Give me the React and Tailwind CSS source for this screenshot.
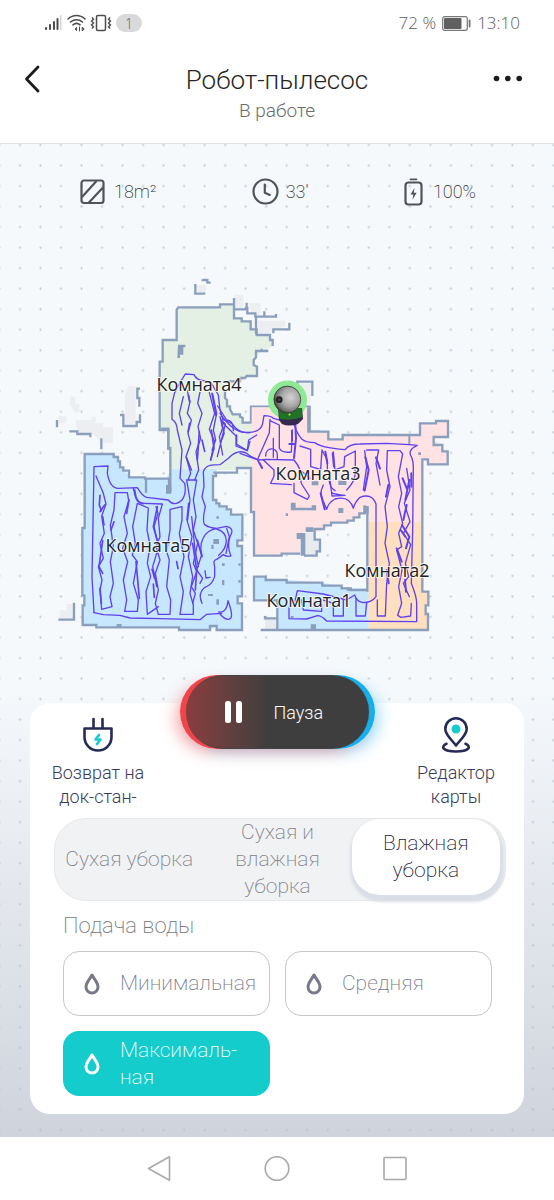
import React, { useState } from "react";

const wall = "#8b9fbd";

function StatusBar() {
  return (
    <div className="flex h-[46px] items-center justify-between pr-[34px] pl-11 font-['Open_Sans',sans-serif] text-[17px] font-light text-[#5c5c5c]">
      <div className="flex items-center gap-1">
        <svg className="h-[18px] w-[19px]" viewBox="0 0 19 18" fill="#4d4d4d">
          <rect x="1" y="13" width="2" height="3" rx="1" />
          <rect x="5" y="10" width="2" height="6" rx="1" />
          <rect x="9" y="7" width="2" height="9" rx="1" />
          <rect x="12.500" y="4" width="2" height="12" rx="1" />
          <rect x="16" y="1" width="1.500" height="15" rx=".7" fill="#d5d5d5" />
        </svg>
        <svg className="h-[18px] w-[19px]" viewBox="0 0 19 18" fill="none" stroke="#4d4d4d" strokeWidth="1.600" strokeLinecap="round">
          <path d="M1 5C6 .3 13 .3 18 5M3.500 8c3.500-3 8.500-3 12 0M6 10.800c2-1.700 5-1.700 7 0" />
          <path d="M9.300 13.700L8 15l1.300 1.300zM12.500 13v4M15.500 13.300l1.700 1.700-1.700 1.700z" strokeWidth="1" fill="#4d4d4d" />
        </svg>
        <svg className="h-[18px] w-[22px]" viewBox="0 0 22 18" fill="none" stroke="#4d4d4d" strokeWidth="1.500">
          <rect x="6.500" y="1.500" width="9" height="15" rx="1.500" />
          <path d="M2 3.500l1.500 1.800L1.500 7l2 2-2 2 2 1.800L2 14.500M20 3.500l-1.500 1.800L20.500 7l-2 2 2 2-2 1.800 1.500 1.700" strokeWidth="1.400" />
        </svg>
        <span className="flex h-[18px] w-[26px] items-center justify-center rounded-full bg-[#d9d9d9] text-[14px]">1</span>
      </div>
      <div className="flex items-center gap-[6px]">
        <span>72 %</span>
        <svg className="h-[15px] w-[29px]" viewBox="0 0 29 15">
          <rect x=".7" y=".7" width="24.600" height="13.600" rx="2" fill="none" stroke="#777" strokeWidth="1.200" />
          <rect x="2" y="2" width="17.500" height="11" rx="1" fill="#606060" />
          <rect x="26.700" y="3.500" width="1.800" height="8" rx=".8" fill="#777" />
        </svg>
        <span>13:10</span>
      </div>
    </div>
  );
}

function Header() {
  return (
    <header className="flex h-[98px] items-start justify-between border-b border-[#dedfe1] px-[22px] pt-[18px]">
      <button aria-label="Назад" className="flex h-[30px] w-9 items-center">
        <svg className="h-[30px] w-5" viewBox="0 0 20 30" fill="none" stroke="#1c1c1c" strokeWidth="2.800" strokeLinecap="round" strokeLinejoin="round">
          <path d="M16 3L4.500 15 16 27" />
        </svg>
      </button>
      <div className="text-center font-light">
        <h1 className="text-[26px] leading-8 text-[#262626]">Робот-пылесос</h1>
        <p className="text-[19px] leading-[30px] text-[#6b6b6b]">В работе</p>
      </div>
      <button aria-label="Меню" className="-ml-1 flex h-[30px] w-10 items-center">
        <svg className="h-[30px] w-8" viewBox="0 0 32 30" fill="#1c1c1c">
          <circle cx="4.500" cy="14.500" r="2.800" />
          <circle cx="15.800" cy="14.500" r="2.800" />
          <circle cx="27.200" cy="14.500" r="2.800" />
        </svg>
      </button>
    </header>
  );
}

function Stats() {
  return (
    <div className="flex h-[95px] items-center justify-between px-[78px] pl-20 text-[18px] font-extralight text-[#303336]">
      <div className="flex items-center gap-[9px]">
        <svg className="h-[26px] w-[25px]" viewBox="0 0 25 26" fill="none" stroke="#505458" strokeWidth="2.200">
          <rect x="1.500" y="1.500" width="22" height="22.500" rx="2.500" />
          <path d="M2 18L16.500 2M8.500 24L23 8.500" />
        </svg>
        <span>18m²</span>
      </div>
      <div className="flex items-center gap-[7px]">
        <svg className="h-[27px] w-[27px]" viewBox="0 0 27 27" fill="none" stroke="#505458" strokeWidth="2.200" strokeLinecap="round" strokeLinejoin="round">
          <circle cx="13.500" cy="13.500" r="12" />
          <path d="M12.800 6.500v8.200l5 2.200" />
        </svg>
        <span>33'</span>
      </div>
      <div className="flex items-center gap-[10px]">
        <svg className="h-[28px] w-[19px]" viewBox="0 0 19 28" fill="none" stroke="#505458" strokeWidth="2.200">
          <path d="M6.500 1.300h6" strokeLinecap="round" strokeWidth="1.800" />
          <rect x="1.500" y="4.500" width="16" height="22" rx="3" />
          <path d="M10.500 10L6.500 16.500h2.800L8.500 21.500l4.200-6.800H9.800z" fill="#505458" stroke="none" />
        </svg>
        <span>100%</span>
      </div>
    </div>
  );
}

// The three groups below share a scale of three drawing units to one map pixel.
function FloorMap() {
  return (
    <svg className="w-full" viewBox="0 239 554 436" role="img" aria-label="Карта уборки">
      <defs>
        <radialGradient id="dome" cx=".62" cy=".42" r=".62">
          <stop offset="0" stopColor="#d2d2d2" />
          <stop offset=".55" stopColor="#a6a6a6" />
          <stop offset=".85" stopColor="#747474" />
          <stop offset="1" stopColor="#444" />
        </radialGradient>
      </defs>
      <g transform="translate(150 270) scale(.33333)">
        <path fill="#eceef0" d="M254 74h26v42h-26zM295 100h36v38l-26-8zM325 152h80v16l-50 22h-30zM140 45h26v22h-26zM448 340h34v60h-34z" />
        <path fill="#e3f0e3" d="M80 115L210 112 212 103 252 103V145L275 148 302 155 305 178 320 182 322 195 360 197 368 210V228L335 243 318 262 310 275 322 290V318L290 322 270 335 225 350 230 405 240 415 250 433 270 440 280 458 305 462V590H260V600H60L55 535V480L28 475V275L38 270V210L78 208z" />
        <g fill="none" stroke={wall} strokeWidth="7">
          <path d="M55 540V480H29V275H38V210H80V119L85 112H210V103H252M252 84V145H275V154H302V178H320V195H360V210H368V228M355 243H335V236M335 243H318V262L311 270V285L321 290V318H290L285 324H270V334H235M225 360V384L231 390V409H240V418L248 433H270V440L278 444V458H303V410H479V486H510M442 372V335H487V378" />
          <path d="M252 118H285L290 110V98M292 110V130H316V140H378V132M343 124V140M318 140V192M418 158V178H370V190M158 28V30H172V38H182M136 42V71H166" />
        </g>
        <path fill={wall} d="M84 224h22v8h-6v22h-10v10h-8z" />
      </g>
      <g transform="translate(50 370) scale(.33333)">
        <path fill="#eceef1" d="M60 80h16v22h12v25h-14l-14-24zM25 138h24v22H25zM75 150h50v-10h12v20h22v12h30v48h-28l-38-32H85zM225 70l10-22h22v115h-32zM30 738v-18h20v-18h22v44H30z" />
        <path fill="#c6e7fd" d="M105 250H185L205 262 210 290 240 320 285 325H350L362 298H500V308H490V390L510 400 545 432 575 440 578 510 560 515 562 528 578 530V675L565 680 568 700 578 705 575 780H510L495 768 480 780H390L385 770H140L135 765H98V705L105 675 98 670V475L105 470z" />
        <g fill="none" stroke={wall} strokeWidth="7">
          <path d="M333 176H355V234H361V366M490 308H561V294H600M498 308V318H489V390H499V400H508V409H530V418H543V434H577V511H562V528H576V679H563V700H576V780H512V780H500V768H480V780H387V772H139V765H98V706H103V676H97V474H104V252H191V261H204V274H210V292H220V302H237V322H285V326H357V366M288 326V368" />
          <path d="M21 150V172M58 184H82V192H121V202M154 205V238M210 135H220V168H260V156H270V133M270 56H262V84H268V110M72 698V749H25" />
        </g>
        <path fill={wall} d="M348 345h16v26h-16zM490 507h17v15h-17zM484 524h7v13h-7zM499 439h8v7h-8zM516 580h8v8h-8zM565 580h7v7h-7zM516 630h7v16h-7zM565 630h7v8h-7zM474 672h15v6h-15zM499 688h8v16h-8zM200 762h15v10h-15z" />
      </g>
      <g transform="translate(220 370) scale(.33333)">
        <path fill="#e7eaee" d="M252 488h36v22h12v35l-16 12h-32zM135 742h36v38h-36zM640 210l20 10-14 20zM145 755h20v20h-20z" />
        <path fill="#fee2e4" d="M95 112H265V185H325L330 208H368L370 195H600V160H648V155H684V200H640L642 225 668 235 684 250V283H630L607 268 603 455H445V408H430L420 440 395 455 340 462 300 485H260L240 490V548H185L184 557H103V425H93z" />
        <path fill="#fedfbf" d="M445 455H603L607 665H622V705H615V730H622V778H445z" />
        <path fill="#c6e7fd" d="M103 618L135 625 200 630 310 638 390 655H445V778H175V692H103z" />
        <g fill="none" stroke={wall} strokeWidth="7">
          <path d="M265 112V185H325V208H368V195H600V160H648V153H684V201H641V225H667V244H683V283H624V268H607V665H625V706H617V732H624V780H133L122 780M172 780V745H135V738M93 290V426H102V557H185V551H241M442 408V665M442 660H390L385 655H365V647H307V638H200V630H137V620H102V691H172V780" />
          <path d="M434 406V430H418V442H401V452H382V458H333V466H312V477H284V490M284 484V509H300V544H290V557H252M216 400V417H285V408" />
          <path d="M568 198V222" strokeWidth="6" />
        </g>
        <path fill={wall} d="M230 489h26v68h-14v-50h-12zM257 472h23v14h-23zM213 398h14v20h-14zM275 406h13v15h-13zM355 414h15v15h-15zM355 332h24v13h-24zM275 334h20v12h-20zM272 763h16v16h-16zM212 738h9v6h-9zM197 430h7v8h-7zM595 247h8v8h-8zM430 408h16v22h-16zM380 652h16v10h-16z" />
      </g>

      <g fill="none" stroke="#5f42ee" strokeLinejoin="round" strokeLinecap="round">
        <g transform="translate(50 370) scale(.33333)" strokeWidth="4">
          <path d="M132 728L126 620 132 290 174 288 172 310Q180 355 205 355L262 353Q278 380 290 382L355 390Q372 412 396 390 410 372 404 340L390 325 396 240 382 180Q380 155 366 148V100L374 68 392 34 406 12 432 14Q440 30 455 31L482 36 505 75 510 120 518 148 545 160 557 174Q575 190 600 188" />
          <path d="M132 728L160 734 210 736 240 744 330 746 450 749 470 733 515 730M138 318L160 370 168 402 155 438 163 490 150 520 160 565 145 590 156 630 150 660 155 718 186 710 180 680 190 640 181 575 190 530 181 465 192 420 195 368H232L236 392 222 440 232 490 218 535 233 575 220 630 230 690 224 724H262L265 690 250 640 262 575 247 555 256 520 248 470 262 400 295 414 291 480 300 525 292 580 302 620 288 665 292 733 325 710M325 733H360L362 690 350 650 358 570 350 545 360 480V418L396 410V450L388 490 402 560 390 620 400 665 390 733H430V705L420 670 428 620 415 560 426 500 412 455 420 390 410 330H438" />
          <path d="M250 355L256 380Q262 400 280 400L337 402 325 445 330 500 318 530 330 570 316 610 325 660 316 700 325 733M318 410L324 430 312 470 326 530 308 590 320 650M440 330L430 390 438 440 430 480 443 520 430 580 440 605 424 650 436 670 428 700M400 80L388 130 396 165M412 62L420 95 412 130 424 150 414 190 422 220 408 260 422 310 415 328M450 66L443 100 456 130 444 170 452 205 438 245 446 300 434 330M478 68L494 130 478 178 494 215 482 270M488 72L500 130 490 180 497 210 486 240M510 140L518 175 508 200 518 255M512 148L526 162 512 220 502 260M503 108L530 150Q550 150 550 182M515 155L558 198V228L592 242 600 214" />
          <path d="M600 258Q570 230 536 264L510 284Q490 284 480 286 465 290 460 305L462 350 456 380 466 410Q456 455 464 464 480 475 500 475L530 469Q555 475 540 500 530 530 543 558Q532 562 520 554L500 568Q488 570 494 590V620Q486 645 465 652 442 670 456 700M500 476C462 480 445 520 456 556M506 556C535 530 540 490 500 477M530 475L538 500 528 550M465 602L468 624 480 622M510 732Q530 755 542 745 550 735 534 692 530 730 506 726M455 555L440 600 458 625 450 640M425 440L435 540 445 590" />
          <path strokeWidth="5" d="M150 376L148 405 154 422M164 405L150 425M158 512L147 590 158 610M150 655L154 700M158 440L162 465M192 455L183 480M237 390L230 430M258 575L268 685M415 75L419 96M419 160L414 185M409 262L424 300M448 185L442 270M456 210L464 244M486 70L498 136M484 180L492 235 482 270M516 160L522 190 512 216M306 598L314 625M322 410L310 470 330 540M380 575L384 596M416 400L411 450M428 520L440 600 436 660M442 510L456 560M254 360L258 382Q265 400 280 401M310 642L313 682" />
        </g>
        <g transform="translate(220 370) scale(.33333)" strokeWidth="4">
          <path d="M0 130Q40 188 75 187 122 190 128 160L132 137Q155 138 160 145L185 152 220 152Q226 185 245 207 258 218 285 218 300 232 375 239 388 222 420 222L500 220 568 224 592 226Q560 240 575 262 580 275 580 290L578 480 574 640Q590 680 590 700V755L320 753Q305 737 292 737L260 747 207 746V712" />
          <path d="M90 258L116 270 140 268 222 270Q235 285 240 300L270 325M114 270L60 250M310 345Q298 370 306 385L320 418Q325 398 345 387 388 375 400 415 404 398 420 382 455 368 468 402V680Q455 698 430 698 410 695 404 675L380 690 310 672 232 662 225 694M50 195V223L82 242 86 210 110 195M150 148L148 188 112 270 126 292M150 152L178 165V235Q185 250 214 246L217 180M160 205V262M137 258C137 230 172 230 172 255V266M240 228L272 238V290L302 298 306 240 322 270V300M340 246L345 300 372 290 374 260 406 243V294M130 270L162 300V318L152 340 214 344M222 340V368L262 388 268 378 245 342 240 325M330 330L336 378 375 376Q345 374 335 368" />
          <path d="M328 320Q325 350 345 362M380 360Q410 330 405 300M434 242L440 290 430 360M440 240H476L468 280 480 345M502 244L500 300 510 350 495 410 502 470 495 520 508 580 500 640 496 738H472V690M502 242H540L548 252 535 320 545 370 536 410 548 460 536 490 545 530 530 540 546 600 536 650 545 700 533 736 543 742 572 738 574 700M560 295L570 360 553 400 570 455 550 490 572 524 556 580 566 620 550 640 568 680M408 685V738H436L440 698M370 680V738H340V700L310 690M245 690L250 720 305 724V705" />
          <path strokeWidth="6" d="M226 162L228 205 222 264M216 182V212M208 222H224M436 262L446 300 434 362M548 325L562 360M568 330L556 390M560 405L550 450M546 465L568 500 558 535M542 480L556 500M530 535L545 575M555 630L558 665M118 278L126 294M316 245L322 280M338 250L342 290M505 345L498 380M468 262L480 296M302 370L314 418M500 600L506 640M574 310V350" />
        </g>
      </g>

      <circle cx="287.500" cy="400" r="19.500" fill="#8ee894" />
      <path d="M278 408h24l1 11-5 5q-9 3-16 0l-3-4z" fill="#36274f" />
      <path d="M278.500 408h23l1 9q-10 4-23 2z" fill="#217126" />
      <circle cx="289.500" cy="414.500" r="1" fill="#d9ec29" />
      <circle cx="287.300" cy="399.500" r="13.400" fill="url(#dome)" stroke="#333" strokeWidth=".8" />
      <circle cx="279.200" cy="399.700" r="3.400" fill="#222" />
      <circle cx="279.200" cy="399.700" r="1.300" fill="#444" />

      <g className="font-['Open_Sans',sans-serif] text-[18px]" fill="#202225" stroke="#fff" strokeWidth="2" strokeOpacity=".8" strokeLinejoin="round" paintOrder="stroke" textAnchor="middle">
        <text x="199" y="391">Комната4</text>
        <text x="318" y="480">Комната3</text>
        <text x="387" y="577">Комната2</text>
        <text x="309" y="607">Комната1</text>
        <text x="148" y="552">Комната5</text>
      </g>
    </svg>
  );
}

function PauseButton() {
  return (
    <button className="relative z-10 -mb-[46px] self-center rounded-full bg-linear-to-r from-[#f04448] from-50% to-[#16aeeb] to-50% px-[6px] text-white shadow-[-8px_6px_16px_-4px_rgba(240,68,72,0.45),8px_6px_16px_-4px_rgba(22,174,235,0.4)]">
      <span className="flex h-[74px] w-[183px] items-center gap-8 rounded-full border-y border-[#454545] bg-linear-to-r from-[#8a3c3e] via-[#3e3e3e] via-45% to-[#3e3e3e] pl-[39px] text-[18px] font-light">
        <svg className="h-[22px] w-[17px]" viewBox="0 0 17 22" fill="#fff">
          <rect width="6" height="22" rx="2.500" />
          <rect x="11" width="6" height="22" rx="2.500" />
        </svg>
        Пауза
      </span>
    </button>
  );
}

function Actions() {
  return (
    <div className="flex justify-between px-5 text-center text-[18px] leading-6 font-light text-[#393c5c]">
      <button className="flex w-24 flex-col items-center gap-2">
        <svg className="h-9 w-8" viewBox="0 0 32 36" fill="none" stroke="#252a57" strokeWidth="2.600" strokeLinecap="round" strokeLinejoin="round">
          <path d="M11.500 2v9M20.500 2v9M2.500 11.500h27V20a13.500 13.500 0 0 1-27 0z" />
          <path d="M17 18l-3.500 4.500h5L15 27" stroke="#16cccc" strokeWidth="2.600" />
        </svg>
        <span>Возврат на док-стан-</span>
      </button>
      <button className="flex w-24 flex-col items-center gap-2">
        <svg className="h-9 w-8" viewBox="0 0 32 36" fill="none" stroke="#252a57" strokeWidth="2.600" strokeLinecap="round" strokeLinejoin="round">
          <path d="M16 28.500C12 23 5.300 18 5.300 12a10.700 10.700 0 0 1 21.400 0c0 6-6.700 11-10.700 16.500z" />
          <path d="M6.500 26.800c-6 2.600-4.200 7.700 9.500 7.700s15.500-5.100 9.500-7.700" />
          <circle cx="16" cy="12" r="4.500" fill="#16cccc" stroke="none" />
        </svg>
        <span>Редактор карты</span>
      </button>
    </div>
  );
}

function Modes() {
  const modes = ["Сухая уборка", "Сухая и влажная уборка", "Влажная уборка"];
  const [mode, setMode] = useState(2);
  return (
    <div className="mt-[9px] mr-[18px] ml-6 grid grid-cols-3 rounded-[32px] border border-[#e6e8ea] bg-[#f1f2f4] pr-[5px] text-[21px] leading-[27px] font-extralight">
      {modes.map((name, i) => (
        <button
          key={name}
          onClick={() => setMode(i)}
          aria-pressed={mode === i}
          className={
            mode === i
              ? "mb-[5px] rounded-[28px] bg-white px-7 text-[#16183c] shadow-[1px_4px_3px_3px_#dadee6]"
              : i === 1
                ? "px-6 text-[#7d8088]"
                : "text-[#7d8088]"
          }
        >
          {name}
        </button>
      ))}
    </div>
  );
}

function Drop() {
  return (
    <svg className="h-[22px] w-4 shrink-0" viewBox="0 0 16 22" fill="none" stroke="currentColor" strokeWidth="3" strokeLinejoin="round">
      <path d="M8 2C6 6 2 9.500 2 14a6 6 0 0 0 12 0C14 9.500 10 6 8 2z" />
    </svg>
  );
}

function WaterSupply() {
  const levels = ["Минимальная", "Средняя", "Максималь-ная"];
  const [level, setLevel] = useState(2);
  return (
    <section className="mt-[9px] pr-8 pl-[33px] font-extralight">
      <h2 className="text-[22px] leading-8 text-[#767980]">Подача воды</h2>
      <div className="mt-[9px] grid grid-cols-2 gap-[15px]">
        {levels.map((name, i) => (
          <button
            key={name}
            onClick={() => setLevel(i)}
            aria-pressed={level === i}
            className={
              level === i
                ? "flex h-[65px] items-center gap-5 rounded-2xl bg-[#14cccb] pl-[21px] text-left text-[21px] leading-[27px] text-white"
                : "flex h-[65px] items-center gap-5 rounded-2xl border border-[#c7c7ca] pl-5 text-left text-[21px] leading-[27px] text-[#77798b]"
            }
          >
            <Drop />
            <span className="w-32">{name}</span>
          </button>
        ))}
      </div>
    </section>
  );
}

function NavBar() {
  return (
    <nav className="flex h-[63px] items-center justify-center gap-[92px] bg-white">
      <button aria-label="Назад">
        <svg className="h-[27px] w-[26px]" viewBox="0 0 26 27" fill="none" stroke="#a9a9a9" strokeWidth="1.600" strokeLinejoin="round">
          <path d="M23.500 1.800v23.400L2.500 13.500z" />
        </svg>
      </button>
      <button aria-label="Домой">
        <svg className="h-[27px] w-[26px]" viewBox="0 0 26 27" fill="none" stroke="#a9a9a9" strokeWidth="1.600">
          <circle cx="13" cy="13.500" r="11.800" />
        </svg>
      </button>
      <button aria-label="Недавние">
        <svg className="h-[27px] w-[26px]" viewBox="0 0 26 27" fill="none" stroke="#a9a9a9" strokeWidth="1.600">
          <rect x="2" y="2.500" width="22" height="22" rx="1" />
        </svg>
      </button>
    </nav>
  );
}

export default function App() {
  return (
    <div className="flex min-h-screen flex-col bg-white font-['Roboto',sans-serif]">
      <StatusBar />
      <Header />
      <main className="relative isolate flex flex-1 flex-col bg-linear-to-b from-[#f5f9fc] from-55% to-[#cfd3dc] pb-[23px]">
        <svg className="absolute inset-0 -z-10 h-full w-full" aria-hidden="true">
          <defs>
            <pattern id="dots" x="9.700" y="-9.200" width="20.520" height="20.520" patternUnits="userSpaceOnUse">
              <circle cx="10.260" cy="10.260" r="1.100" fill="#b8bfc8" fillOpacity=".8" />
            </pattern>
          </defs>
          <rect width="100%" height="100%" fill="url(#dots)" />
        </svg>
        <Stats />
        <FloorMap />
        <PauseButton />
        <div className="mx-[30px] flex-1 rounded-[20px] bg-white pt-[14px] pb-[18px]">
          <Actions />
          <Modes />
          <WaterSupply />
        </div>
      </main>
      <NavBar />
    </div>
  );
}
